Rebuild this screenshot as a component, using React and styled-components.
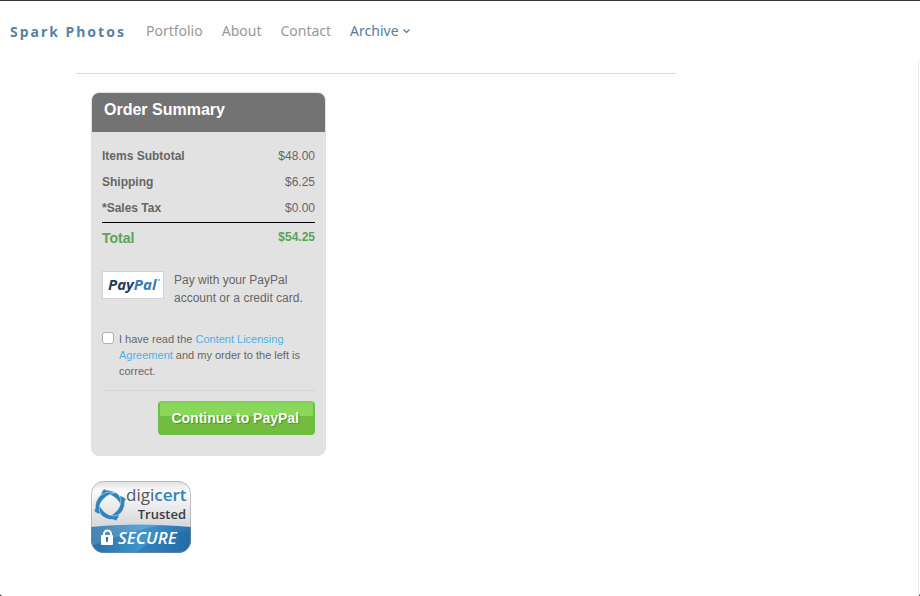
import styled, { createGlobalStyle } from "styled-components";

const GlobalStyle = createGlobalStyle`
  * {
    box-sizing: border-box;
  }

  body {
    margin: 0;
    background: #38363a;
    font-family: "Liberation Sans", Arial, sans-serif;
  }
`;

const Page = styled.div`
  display: flex;
  flex-direction: column;
  min-height: 100vh;
  border-top: 1px solid #38363a;
  border-radius: 0 0 3px 3px;
  background: #fefefe;
`;

const Navbar = styled.header`
  display: flex;
  align-items: center;
  gap: 20px;
  height: 60px;
  padding: 0 10px;
  font-family: "Noto Sans", "Open Sans", sans-serif;
`;

const Brand = styled.a`
  color: #5583a4;
  font-size: 14px;
  font-weight: 700;
  letter-spacing: 2px;
  text-decoration: none;
`;

const Menu = styled.nav`
  display: flex;
  gap: 19px;
`;

const MenuLink = styled.a`
  display: flex;
  align-items: center;
  gap: 4px;
  color: ${(props) => (props.$active ? "#557d9b" : "#999")};
  font-size: 14px;
  line-height: 20px;
  text-decoration: none;
`;

const Content = styled.main`
  flex: 1;
  margin-right: 1px;
  padding: 12px 76px 40px;
  border-right: 1px solid #e9e9e9;
`;

const Column = styled.div`
  max-width: 600px;
  padding: 18px 15px 0;
  border-top: 1px solid #d9d9d9;
`;

const Card = styled.section`
  width: 235px;
  border: 1px solid #e2e2e2;
  border-radius: 8px;
  background: #e2e2e2;
  color: #666;
  font-size: 12px;
  overflow: hidden;
`;

const CardTitle = styled.h2`
  height: 39px;
  margin: 0;
  padding: 0 12px;
  background: #737373;
  color: #fff;
  font-size: 16px;
  line-height: 34px;
`;

const CardBody = styled.form`
  padding: 12px 10px 20px;
`;

const Totals = styled.table`
  width: 100%;
  border-spacing: 0;

  th,
  td {
    padding: 0 0 2px;
    line-height: 24px;
    vertical-align: top;
  }

  th {
    text-align: left;
  }

  td {
    text-align: right;
  }

  tfoot th,
  tfoot td {
    padding: 0;
    border-top: 1px solid #000;
    color: #5ba356;
    font-weight: 700;
    line-height: 28px;
  }

  tfoot th {
    font-size: 14px;
    line-height: 30px;
  }
`;

const PayMethod = styled.div`
  display: flex;
  gap: 10px;
  margin-top: 18px;

  p {
    margin: 0;
    line-height: 18px;
  }
`;

const PayPalLogo = styled.svg`
  flex: none;
  width: 62px;
  height: 28px;
  border: 1px solid #d2d2d2;
  background: #fff;
`;

const Agreement = styled.div`
  display: flex;
  gap: 5px;
  margin-top: 24px;
  padding-bottom: 11px;
  border-bottom: 1px dotted #ccc;
  font-size: 11px;
  line-height: 16px;

  a {
    color: #4db1e8;
    text-decoration: none;
  }
`;

const Checkbox = styled.input`
  flex: none;
  width: 12px;
  height: 12px;
  margin: 1px 0 0;
  border: 1px solid #b0b0b0;
  border-radius: 3px;
  background: #fff;
  appearance: none;

  &:checked {
    background: #4db1e8;
  }
`;

const PayButton = styled.button`
  display: block;
  height: 34px;
  margin: 10px 0 0 auto;
  padding: 0 14px 0 11px;
  border: 2px solid #6cbd42;
  border-top-color: #7fd04e;
  border-radius: 4px;
  background: linear-gradient(#8ad85b 0 45%, #72bd3f 45%);
  color: #f8fff2;
  font-family: inherit;
  font-size: 14px;
  font-weight: 700;
  text-shadow: 1px 1px 1px #4f8f2b;
  cursor: pointer;
`;

const Seal = styled.svg`
  display: block;
  width: 100px;
  height: 73px;
  margin-top: 24px;
  font-family: "Open Sans", "Noto Sans", sans-serif;
`;

const items = [
  { label: "Items Subtotal", amount: "$48.00" },
  { label: "Shipping", amount: "$6.25" },
  { label: "*Sales Tax", amount: "$0.00" },
];

function DigicertSeal() {
  return (
    <Seal viewBox="0 0 100 73" role="img" aria-label="digicert Trusted Secure">
      <defs>
        <linearGradient id="sealTop" x1="0" y1="0" x2="0" y2="1">
          <stop offset="0" stopColor="#dcdcde" />
          <stop offset="0.15" stopColor="#fbfbfb" />
          <stop offset="0.6" stopColor="#d9dadd" />
        </linearGradient>
        <linearGradient id="sealBlue" x1="0" y1="0" x2="1" y2="0">
          <stop offset="0" stopColor="#2a6da6" />
          <stop offset="0.5" stopColor="#3f95cc" />
          <stop offset="1" stopColor="#2a72ad" />
        </linearGradient>
        <clipPath id="sealShape">
          <rect x="0" y="1" width="100" height="72" rx="13" />
        </clipPath>
      </defs>
      <g clipPath="url(#sealShape)">
        <rect width="100" height="73" fill="url(#sealTop)" />
        <path d="M0 47Q45 42 100 47V73H0Z" fill="url(#sealBlue)" />
        <path d="M0 47Q45 42 72 45Q40 50 0 66Z" fill="#fff" opacity="0.14" />
        <path d="M45 73Q65 54 100 51V73Z" fill="#1c5f9b" opacity="0.35" />
      </g>
      <rect x="0.5" y="1.5" width="99" height="71" rx="12" fill="none" stroke="#8b8f95" strokeOpacity="0.5" />
      <g fill="#2f83bd" stroke="#f2f2f3" strokeWidth="0.5" transform="translate(19 25) scale(0.94)">
        {[14, 104, 194, 284].map((angle) => (
          <path
            key={angle}
            d="M-10 -15C-8 -14 -6 -14.500 -4 -15C6 -16 14 -9 14 2C10 -6 3 -11 -5 -10.500C-8 -10 -10 -9 -12 -7C-12 -10 -12 -13 -10 -15Z"
            transform={`rotate(${angle})`}
          />
        ))}
      </g>
      <text x="35" y="21" fontSize="17" fill="#55565a">
        digi
        <tspan fill="#2f83bd" fontWeight="600">cert</tspan>
      </text>
      <text x="95" y="39" fontSize="13" fontWeight="600" fill="#3b3c40" textAnchor="end">
        Trusted
      </text>
      <path d="M13 56V54a3.500 3.500 0 0 1 7 0V56" fill="none" stroke="#fff" strokeWidth="2" />
      <rect x="10" y="55" width="12" height="10" rx="1" fill="#fff" />
      <path d="M15 57h2v2.500l-.500 3h-1l-.500-3z" fill="#2a6da6" />
      <text x="27" y="64" fontSize="17" fontWeight="600" fontStyle="italic" fill="#fff">
        SECURE
      </text>
    </Seal>
  );
}

export default function App() {
  return (
    <Page>
      <GlobalStyle />
      <Navbar>
        <Brand href="#">Spark Photos</Brand>
        <Menu>
          <MenuLink href="#portfolio">Portfolio</MenuLink>
          <MenuLink href="#about">About</MenuLink>
          <MenuLink href="#contact">Contact</MenuLink>
          <MenuLink href="#archive" $active>
            Archive
            <svg width="7" height="5" viewBox="0 0 7 5" aria-hidden="true">
              <path d="M0.500 0.500l3 3l3-3" fill="none" stroke="currentColor" strokeWidth="1.200" />
            </svg>
          </MenuLink>
        </Menu>
      </Navbar>
      <Content>
        <Column>
          <Card>
            <CardTitle>Order Summary</CardTitle>
            <CardBody onSubmit={(e) => e.preventDefault()}>
              <Totals>
                <tbody>
                  {items.map((item) => (
                    <tr key={item.label}>
                      <th scope="row">{item.label}</th>
                      <td>{item.amount}</td>
                    </tr>
                  ))}
                </tbody>
                <tfoot>
                  <tr>
                    <th scope="row">Total</th>
                    <td>$54.25</td>
                  </tr>
                </tfoot>
              </Totals>
              <PayMethod>
                <PayPalLogo viewBox="0 0 60 26" role="img" aria-label="PayPal">
                  <text x="5" y="18" fontSize="15" fontWeight="700" fontStyle="italic" fontFamily="Open Sans, sans-serif" fill="#253b64">
                    Pay
                    <tspan fill="#3a7cab">Pal</tspan>
                  </text>
                  <path d="M55 8h2" stroke="#3a7cab" />
                </PayPalLogo>
                <p>Pay with your PayPal account or a credit card.</p>
              </PayMethod>
              <Agreement>
                <Checkbox type="checkbox" id="agreement" />
                <label htmlFor="agreement">
                  I have read the <a href="#license">Content Licensing Agreement</a> and
                  my order to the left is correct.
                </label>
              </Agreement>
              <PayButton type="submit">Continue to PayPal</PayButton>
            </CardBody>
          </Card>
          <DigicertSeal />
        </Column>
      </Content>
    </Page>
  );
}
